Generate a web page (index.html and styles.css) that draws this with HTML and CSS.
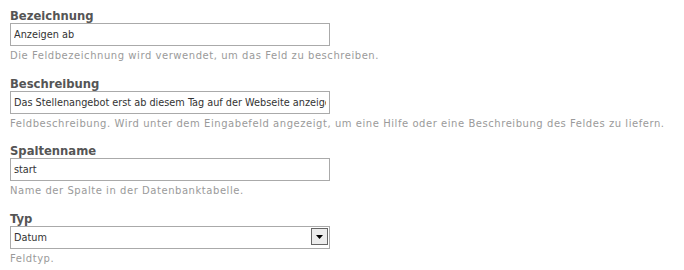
FILE: index.html
```html
<!DOCTYPE html>
<html lang="de">
<head>
    <meta charset="UTF-8">
    <title>Feld bearbeiten</title>
    <link rel="stylesheet" href="styles.css">
</head>
<body>
    <div class="field">
        <label for="label">Bezeichnung</label>
        <input type="text" id="label" value="Anzeigen ab">
        <p class="help">Die Feldbezeichnung wird verwendet, um das Feld zu beschreiben.</p>
    </div>

    <div class="field">
        <label for="description">Beschreibung</label>
        <input type="text" id="description" value="Das Stellenangebot erst ab diesem Tag auf der Webseite anzeigen">
        <p class="help">Feldbeschreibung. Wird unter dem Eingabefeld angezeigt, um eine Hilfe oder eine Beschreibung des Feldes zu liefern.</p>
    </div>

    <div class="field">
        <label for="column">Spaltenname</label>
        <input type="text" id="column" value="start">
        <p class="help">Name der Spalte in der Datenbanktabelle.</p>
    </div>

    <div class="field">
        <label for="type">Typ</label>
        <div class="select-wrap">
            <select id="type">
                <option>Datum</option>
            </select>
            <span class="select-btn">
                <svg width="7" height="4" viewBox="0 0 7 4"><path d="M0 0h7L3.5 4z" fill="#000"/></svg>
            </span>
        </div>
        <p class="help">Feldtyp.</p>
    </div>
</body>
</html>
```

FILE: styles.css
```css
/* page */
body {
    margin: 0;
    padding: 9px 10px 0;
    background: #fff;
    font-family: "DejaVu Sans", Verdana, sans-serif;
}

/* one form row */
.field {
    margin-bottom: 15px;
}

.field:nth-child(2) {
    margin-bottom: 14px;
}

.field label {
    display: block;
    font-weight: bold;
    font-size: 11.6px;
    line-height: 14px;
    color: #555;
}

.field input,
.field select {
    display: block;
    box-sizing: border-box;
    width: 320px;
    height: 23px;
    margin: 0;
    padding: 0 3px;
    border: 1px solid #aaa;
    font-family: "DejaVu Sans Condensed", Tahoma, sans-serif;
    font-size: 10.8px;
    color: #333;
    background: #fff;
    outline: none;
}

.field select {
    appearance: none;
    -webkit-appearance: none;
}

.help {
    margin: 4px 0 0;
    font-size: 10px;
    line-height: 12px;
    color: #9a9a9a;
    letter-spacing: 0.55px;
}

/* dropdown button */
.select-wrap {
    position: relative;
    width: 320px;
}

.select-btn {
    position: absolute;
    top: 2px;
    right: 2px;
    width: 15px;
    height: 15px;
    border: 1px solid #666;
    background: #ececec;
    display: flex;
    align-items: center;
    justify-content: center;
}
```
